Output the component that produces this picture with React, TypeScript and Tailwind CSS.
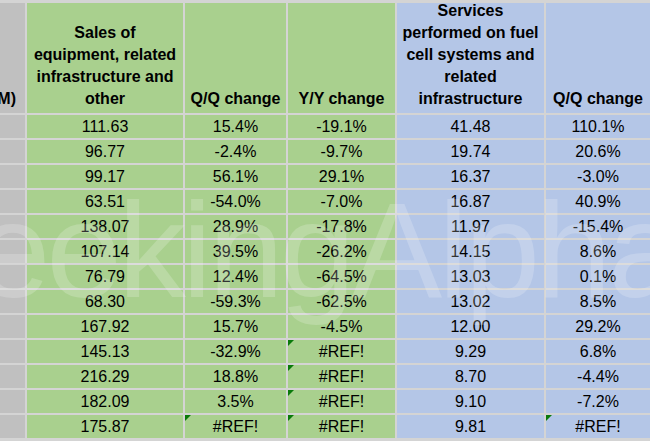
const rows: [string, string, string, string, string][] = [
  ["111.63", "15.4%", "-19.1%", "41.48", "110.1%"],
  ["96.77", "-2.4%", "-9.7%", "19.74", "20.6%"],
  ["99.17", "56.1%", "29.1%", "16.37", "-3.0%"],
  ["63.51", "-54.0%", "-7.0%", "16.87", "40.9%"],
  ["138.07", "28.9%", "-17.8%", "11.97", "-15.4%"],
  ["107.14", "39.5%", "-26.2%", "14.15", "8.6%"],
  ["76.79", "12.4%", "-64.5%", "13.03", "0.1%"],
  ["68.30", "-59.3%", "-62.5%", "13.02", "8.5%"],
  ["167.92", "15.7%", "-4.5%", "12.00", "29.2%"],
  ["145.13", "-32.9%", "#REF!", "9.29", "6.8%"],
  ["216.29", "18.8%", "#REF!", "8.70", "-4.4%"],
  ["182.09", "3.5%", "#REF!", "9.10", "-7.2%"],
  ["175.87", "#REF!", "#REF!", "9.81", "#REF!"],
];

function Cell({ value, tone, flag }: { value: string; tone: "green" | "blue"; flag?: boolean }) {
  return (
    <div
      className={`relative flex items-center justify-center ${
        tone === "green" ? "bg-[#a9d08e]" : "bg-[#b4c6e7]"
      }`}
    >
      {flag && (
        <span className="absolute left-0 top-0 h-0 w-0 border-t-[6px] border-r-[6px] border-t-[#0a7a0a] border-r-transparent" />
      )}
      {value}
    </div>
  );
}

function Head({ children, tone }: { children: React.ReactNode; tone: "green" | "blue" }) {
  return (
    <div
      className={`flex items-end justify-center pb-[3px] text-center font-bold leading-[22px] ${
        tone === "green" ? "bg-[#a9d08e]" : "bg-[#b4c6e7]"
      }`}
    >
      <span>{children}</span>
    </div>
  );
}

export default function App() {
  return (
    <div className="relative h-[441px] w-[650px] overflow-hidden bg-[#d4d4d4] font-['Liberation_Sans',Arial,sans-serif] text-[16px] text-black">
      <div className="grid grid-cols-[25px_156px_101px_107px_147px_1fr] grid-rows-[110px_repeat(13,23px)] gap-[2px] pt-[3px]">
        <div className="flex items-end justify-end overflow-hidden whitespace-nowrap bg-[#c0c0c0] pb-[3px] pr-[9px] font-bold leading-[22px]">
          ($M)
        </div>
        <Head tone="green">
          Sales of
          <br />
          equipment, related
          <br />
          infrastructure and
          <br />
          other
        </Head>
        <Head tone="green">Q/Q change</Head>
        <Head tone="green">Y/Y change</Head>
        <Head tone="blue">
          Services
          <br />
          performed on fuel
          <br />
          cell systems and
          <br />
          related
          <br />
          infrastructure
        </Head>
        <Head tone="blue">Q/Q change</Head>

        {rows.map((r, i) => (
          <div key={i} className="contents">
            <div className="bg-[#c0c0c0]" />
            <Cell value={r[0]} tone="green" />
            <Cell value={r[1]} tone="green" flag={r[1] === "#REF!"} />
            <Cell value={r[2]} tone="green" flag={r[2] === "#REF!"} />
            <Cell value={r[3]} tone="blue" />
            <Cell value={r[4]} tone="blue" flag={r[4] === "#REF!"} />
          </div>
        ))}
      </div>

      {/* watermark */}
      <div className="pointer-events-none absolute left-[-112px] top-[182px] select-none whitespace-nowrap font-['Liberation_Sans',Arial,sans-serif] text-[136px] leading-none tracking-[-4px] text-white/20">
        SeekingAlpha
      </div>
    </div>
  );
}
